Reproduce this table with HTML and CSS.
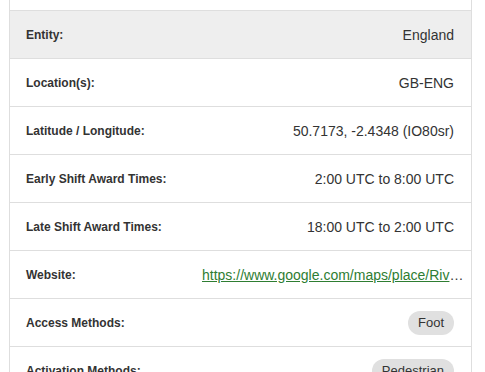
FILE: index.html
```html
<!DOCTYPE html>
<html lang="en">
<head>
    <meta charset="UTF-8">
    <meta name="viewport" content="width=device-width, initial-scale=1.0">
    <title>Park Details</title>
    <link rel="stylesheet" href="styles.css">
</head>
<body>
    <div class="details-card">
        <div class="card-top"></div>

        <div class="detail-row detail-row--shaded">
            <span class="detail-label">Entity:</span>
            <span class="detail-value">England</span>
        </div>
        <div class="detail-row">
            <span class="detail-label">Location(s):</span>
            <span class="detail-value">GB-ENG</span>
        </div>
        <div class="detail-row">
            <span class="detail-label">Latitude / Longitude:</span>
            <span class="detail-value">50.7173, -2.4348 (IO80sr)</span>
        </div>
        <div class="detail-row">
            <span class="detail-label">Early Shift Award Times:</span>
            <span class="detail-value">2:00 UTC to 8:00 UTC</span>
        </div>
        <div class="detail-row">
            <span class="detail-label">Late Shift Award Times:</span>
            <span class="detail-value">18:00 UTC to 2:00 UTC</span>
        </div>
        <div class="detail-row">
            <span class="detail-label">Website:</span>
            <span class="detail-value detail-value--link">
                <a href="#">https://www.google.com/maps/place/River+Frome+Dorchester</a>
            </span>
        </div>
        <div class="detail-row">
            <span class="detail-label">Access Methods:</span>
            <span class="detail-value"><span class="chip">Foot</span></span>
        </div>
        <div class="detail-row">
            <span class="detail-label">Activation Methods:</span>
            <span class="detail-value"><span class="chip">Pedestrian</span></span>
        </div>
    </div>
</body>
</html>
```

FILE: styles.css
```css
:root {
    --text-primary: #333333;
    --border-color: #dedede;
    --row-shade: #eeeeee;
    --chip-bg: #e0e0e0;
    --link: #2e7d32;
}

* {
    margin: 0;
    padding: 0;
    box-sizing: border-box;
}

body {
    font-family: "Liberation Sans", Arial, sans-serif;
    background-color: #ffffff;
    color: var(--text-primary);
    overflow: hidden;
}

.details-card {
    width: 463px;
    margin-left: 9px;
    border-left: 1px solid var(--border-color);
    border-right: 1px solid var(--border-color);
}

.card-top {
    height: 10px;
}

.detail-row {
    display: flex;
    align-items: center;
    justify-content: space-between;
    gap: 16px;
    height: 48px;
    padding: 0 17px 0 16px;
    border-top: 1px solid var(--border-color);
}

.detail-row--shaded {
    background-color: var(--row-shade);
}

.detail-label {
    font-size: 12px;
    font-weight: 700;
    white-space: nowrap;
}

.detail-value {
    font-size: 14px;
    text-align: right;
    white-space: nowrap;
}

/* long URLs get clipped with an ellipsis */
.detail-value--link {
    width: 263px;
    margin-right: -11px;
    overflow: hidden;
    text-overflow: ellipsis;
    text-align: left;
}

.detail-value--link a {
    color: var(--link);
    text-decoration: underline;
}

.chip {
    display: inline-flex;
    align-items: center;
    height: 24px;
    padding: 0 10px;
    font-size: 13px;
    border-radius: 12px;
    background-color: var(--chip-bg);
}
```
